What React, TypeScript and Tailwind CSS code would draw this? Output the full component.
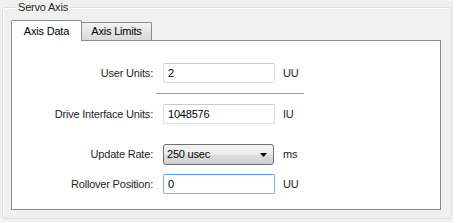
import React from "react";

const font = { fontFamily: '"Liberation Sans", Arial, sans-serif' };

function TextBox({ value, focused }: { value: string; focused?: boolean }) {
  return (
    <div
      className={
        "h-[20px] w-[112px] rounded-[2px] border bg-white pl-[4px] flex items-center text-[11px] text-black " +
        (focused
          ? "border-[#7eb4ea] border-t-[#569de5]"
          : "border-[#dcdfe4] border-t-[#c6c9ce]")
      }
    >
      {value}
    </div>
  );
}

function Label({ text }: { text: string }) {
  return <div className="w-[141px] text-right text-[11px] text-[#1e1e1e] leading-none">{text}</div>;
}

function Unit({ text }: { text: string }) {
  return <div className="ml-[8px] text-[11px] text-[#1e1e1e] leading-none">{text}</div>;
}

export default function App() {
  return (
    <div className="w-[453px] h-[222px] bg-[#f0f0f0] overflow-hidden tracking-[-0.2px]" style={font}>
      <fieldset className="ml-[2px] w-[449px] h-[219px] border border-[#d5dfe5] rounded-[3px] shadow-[inset_1px_1px_0_#ffffff] pl-[8px] pr-[10px]">
        <legend className="ml-[6px] px-[1px] text-[11px] leading-[14px] text-[#1e1e1e]">Servo Axis</legend>
        <div className="mt-[6px]">
          <div className="flex items-end h-[20px] relative z-10">
            <div className="h-[21px] w-[71px] -mb-px bg-white border border-b-0 border-[#898c95] rounded-t-[2px] flex items-center justify-center text-[11px] text-black">
              Axis Data
            </div>
            <div className="h-[18px] w-[70px] border border-l-0 border-b-0 border-[#898c95] rounded-tr-[2px] bg-gradient-to-b from-[#f2f2f2] to-[#d9d9d9] flex items-center justify-center text-[11px] text-black">
              Axis Limits
            </div>
          </div>
          <div className="w-[430px] h-[170px] bg-white border border-[#898c95] pt-[22px]">
            <div className="flex items-center">
              <Label text="User Units:" />
              <div className="ml-[10px]"><TextBox value="2" /></div>
              <Unit text="UU" />
            </div>
            <div className="ml-[144px] mt-[10px] w-[148px] h-px bg-[#a0a0a0]" />
            <div className="flex items-center mt-[10px]">
              <Label text="Drive Interface Units:" />
              <div className="ml-[10px]"><TextBox value="1048576" /></div>
              <Unit text="IU" />
            </div>
            <div className="flex items-center mt-[20px]">
              <Label text="Update Rate:" />
              <div className="ml-[10px] h-[21px] w-[111px] rounded-[3px] border border-[#707070] bg-[linear-gradient(to_bottom,#f2f2f2_0%,#ebebeb_50%,#dddddd_51%,#cfcfcf_100%)] flex items-center pl-[3px] pr-[6px] text-[11px] text-black">
                <span className="flex-1">250 usec</span>
                <svg width="7" height="4" viewBox="0 0 7 4">
                  <path d="M0 0 H7 L3.5 4 Z" fill="#000" />
                </svg>
              </div>
              <div className="ml-[9px] text-[11px] text-[#1e1e1e] leading-none">ms</div>
            </div>
            <div className="flex items-center mt-[9px]">
              <Label text="Rollover Position:" />
              <div className="ml-[10px]"><TextBox value="0" focused /></div>
              <Unit text="UU" />
            </div>
          </div>
        </div>
      </fieldset>
    </div>
  );
}
